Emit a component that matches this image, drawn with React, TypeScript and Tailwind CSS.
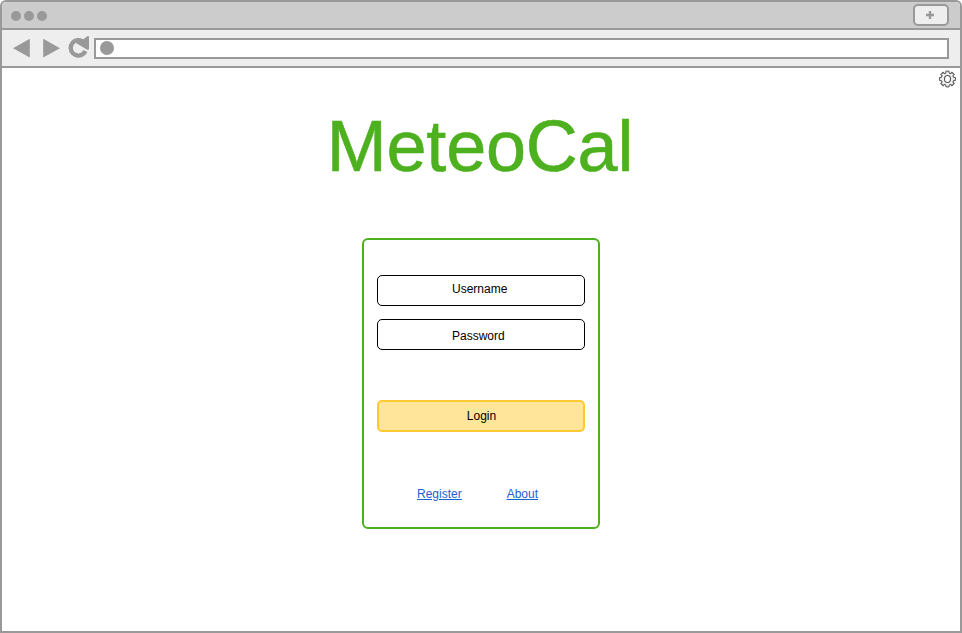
import React from "react";

const dots = [0, 1, 2];

function TitleBar() {
  return (
    <div className="flex h-[28px] items-start justify-between border-b-2 border-[#999999] bg-[#cccccc] pr-[11px] pl-[8.5px]">
      <div className="flex gap-[2.5px] pt-[8.5px]">
        {dots.map((d) => (
          <span key={d} className="size-[10.5px] rounded-full bg-[#999999]" />
        ))}
      </div>
      <button className="mt-[2px] flex h-[22px] w-[36px] items-center justify-center rounded-[5px] border-2 border-[#999999] bg-[#eeeeee]">
        <svg width="8" height="8" viewBox="0 0 8 8" className="mr-[2px]">
          <path d="M4 0V8M0 4H8" stroke="#999999" strokeWidth="2.4" fill="none" />
        </svg>
      </button>
    </div>
  );
}

function Toolbar() {
  return (
    <div className="flex h-[38px] items-start border-b-2 border-[#999999] bg-[#eeeeee] pr-[11px] pl-[11px]">
      <svg width="81" height="36" viewBox="13 30 81 36" className="shrink-0">
        <path d="M13 48.3L29.8 38.8V57.5Z" fill="#999999" />
        <path d="M60 48.3L43.2 38.8V57.5Z" fill="#999999" />
        <path
          d="M80.5 40.5A7.7 7.7 0 1 0 85.4 51"
          fill="none"
          stroke="#999999"
          strokeWidth="4.4"
        />
        <path
          d="M78 38.2Q81 38.4 83.6 39.2L87.2 36.3Q88.9 35.4 89 37.3V49Q88.6 50.2 86.8 49.5L76.4 43.2Z"
          fill="#999999"
        />
      </svg>
      <div className="mt-[8px] flex h-[21px] flex-1 items-start border-2 border-[#999999] bg-white pt-[1px] pl-[4px]">
        <span className="size-[14px] rounded-full bg-[#999999]" />
      </div>
    </div>
  );
}

const teeth = [0, 45, 90, 135, 180, 225, 270, 315];

function Gear() {
  return (
    <svg width="18" height="18" viewBox="-9.5 -9 18 18">
      {teeth.map((a) => (
        <path
          key={a}
          d="M-2.9 -5.4L-1.6 -6V-7.9H1.6V-6L2.9 -5.4"
          transform={`rotate(${a})`}
          fill="#eeeeee"
          stroke="#555555"
          strokeWidth="1"
        />
      ))}
      <circle r="5.6" fill="#eeeeee" />
      <ellipse rx="3" ry="3.5" fill="#ffffff" stroke="#555555" strokeWidth="1.1" />
    </svg>
  );
}

function LoginCard() {
  return (
    <div className="flex h-[291px] w-[238px] flex-col rounded-[6px] border-2 border-[#4db01e] px-[13px] pt-[35px] text-[12px] leading-[14px] text-black">
      <div className="flex h-[31px] shrink-0 justify-start rounded-[5px] border border-black pt-[6px] pl-[74px]">
        Username
      </div>
      <div className="mt-[13px] flex h-[31px] shrink-0 justify-start rounded-[5px] border border-black pt-[9px] pl-[74px]">
        Password
      </div>
      <button className="mt-[50px] flex h-[32px] shrink-0 justify-center rounded-[5px] border-2 border-[#ffc933] bg-[#ffe599] pt-[7px] pl-[1px]">
        Login
      </button>
      <div className="mt-[55px] flex gap-[45px] pl-[40px] text-[#1c62d1] underline">
        <a href="#register">Register</a>
        <a href="#about">About</a>
      </div>
    </div>
  );
}

export default function App() {
  return (
    <div className="h-[633px] w-[962px] overflow-hidden bg-white font-['Liberation_Sans',Arial,sans-serif]">
      <div className="flex h-[633px] flex-col overflow-hidden rounded-t-[6px] border-2 border-[#999999] bg-white">
        <TitleBar />
        <Toolbar />
        <div className="flex h-[22px] shrink-0 justify-end pt-[2px] pr-[4px]">
          <Gear />
        </div>
        <div className="flex flex-col items-center">
          <h1 className="mt-[14px] h-[134px] pr-[2px] text-[72px] leading-[84px] tracking-[-0.2px] text-[#4db01e] [-webkit-text-stroke:0.6px_#4db01e]">
            MeteoCal
          </h1>
          <LoginCard />
        </div>
      </div>
    </div>
  );
}
